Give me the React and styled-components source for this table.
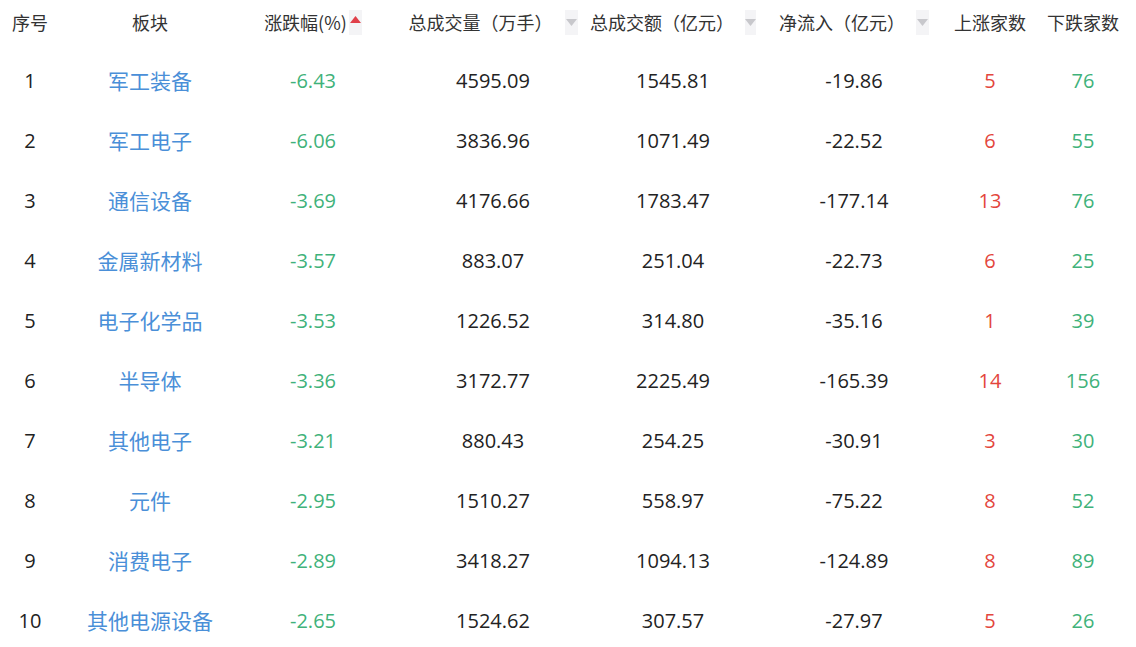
import styled, { createGlobalStyle } from "styled-components";

const GlobalStyle = createGlobalStyle`
  html, body {
    margin: 0;
    padding: 0;
    background: #fff;
    overflow: hidden;
  }
  body {
    font-family: "Microsoft YaHei", "Noto Sans CJK SC", sans-serif;
  }
`;

const columns = "60px 180px 146px 214px 146px 216px 56px 130px";

const rows = [
  ["1", "军工装备", "-6.43", "4595.09", "1545.81", "-19.86", "5", "76"],
  ["2", "军工电子", "-6.06", "3836.96", "1071.49", "-22.52", "6", "55"],
  ["3", "通信设备", "-3.69", "4176.66", "1783.47", "-177.14", "13", "76"],
  ["4", "金属新材料", "-3.57", "883.07", "251.04", "-22.73", "6", "25"],
  ["5", "电子化学品", "-3.53", "1226.52", "314.80", "-35.16", "1", "39"],
  ["6", "半导体", "-3.36", "3172.77", "2225.49", "-165.39", "14", "156"],
  ["7", "其他电子", "-3.21", "880.43", "254.25", "-30.91", "3", "30"],
  ["8", "元件", "-2.95", "1510.27", "558.97", "-75.22", "8", "52"],
  ["9", "消费电子", "-2.89", "3418.27", "1094.13", "-124.89", "8", "89"],
  ["10", "其他电源设备", "-2.65", "1524.62", "307.57", "-27.97", "5", "26"],
];

const Table = styled.div`
  width: 1148px;
`;

const HeaderRow = styled.div`
  display: grid;
  grid-template-columns: ${columns};
  height: 44px;
  margin-bottom: 6px;
`;

const Row = styled.div`
  display: grid;
  grid-template-columns: ${columns};
  height: 60px;
`;

const HeadCell = styled.div`
  display: flex;
  align-items: center;
  justify-content: center;
  gap: ${(p) => p.$gap || 0}px;
  font-size: 18px;
  color: #333;
  white-space: nowrap;
`;

const Cell = styled.div`
  display: flex;
  align-items: center;
  justify-content: center;
  font-family: ${(p) =>
    p.$tone === "blue"
      ? '"Noto Sans CJK SC", sans-serif'
      : '"Open Sans", "Noto Sans CJK SC", sans-serif'};
  font-size: ${(p) => (p.$tone === "blue" ? 21 : 20)}px;
  white-space: nowrap;
  color: ${(p) =>
    p.$tone === "blue"
      ? "#4a8fd8"
      : p.$tone === "green"
      ? "#3fb27a"
      : p.$tone === "red"
      ? "#e3463c"
      : "#222"};
`;

const SortBox = styled.span`
  display: flex;
  justify-content: center;
  align-items: flex-start;
  width: 13px;
  height: 25px;
  background: #f4f4f6;
  svg {
    margin-top: ${(p) => (p.$up ? 6 : 9)}px;
  }
`;

function Sort({ up }) {
  return (
    <SortBox $up={up}>
      {up ? (
        <svg width="11" height="7" viewBox="0 0 11 7">
          <polygon points="5.5,0 11,7 0,7" fill="#e0404a" />
        </svg>
      ) : (
        <svg width="11" height="7" viewBox="0 0 11 7">
          <polygon points="0,0 11,0 5.5,7" fill="#c8c8cc" />
        </svg>
      )}
    </SortBox>
  );
}

export default function App() {
  return (
    <>
      <GlobalStyle />
      <Table>
        <HeaderRow>
          <HeadCell>序号</HeadCell>
          <HeadCell>板块</HeadCell>
          <HeadCell $gap={2}>
            涨跌幅(%)
            <Sort up />
          </HeadCell>
          <HeadCell $gap={12}>
            总成交量（万手）
            <Sort />
          </HeadCell>
          <HeadCell $gap={11}>
            总成交额（亿元）
            <Sort />
          </HeadCell>
          <HeadCell $gap={11}>
            净流入（亿元）
            <Sort />
          </HeadCell>
          <HeadCell>上涨家数</HeadCell>
          <HeadCell>下跌家数</HeadCell>
        </HeaderRow>
        {rows.map((r) => (
          <Row key={r[0]}>
            <Cell>{r[0]}</Cell>
            <Cell $tone="blue">{r[1]}</Cell>
            <Cell $tone="green">{r[2]}</Cell>
            <Cell>{r[3]}</Cell>
            <Cell>{r[4]}</Cell>
            <Cell>{r[5]}</Cell>
            <Cell $tone="red">{r[6]}</Cell>
            <Cell $tone="green">{r[7]}</Cell>
          </Row>
        ))}
      </Table>
    </>
  );
}
